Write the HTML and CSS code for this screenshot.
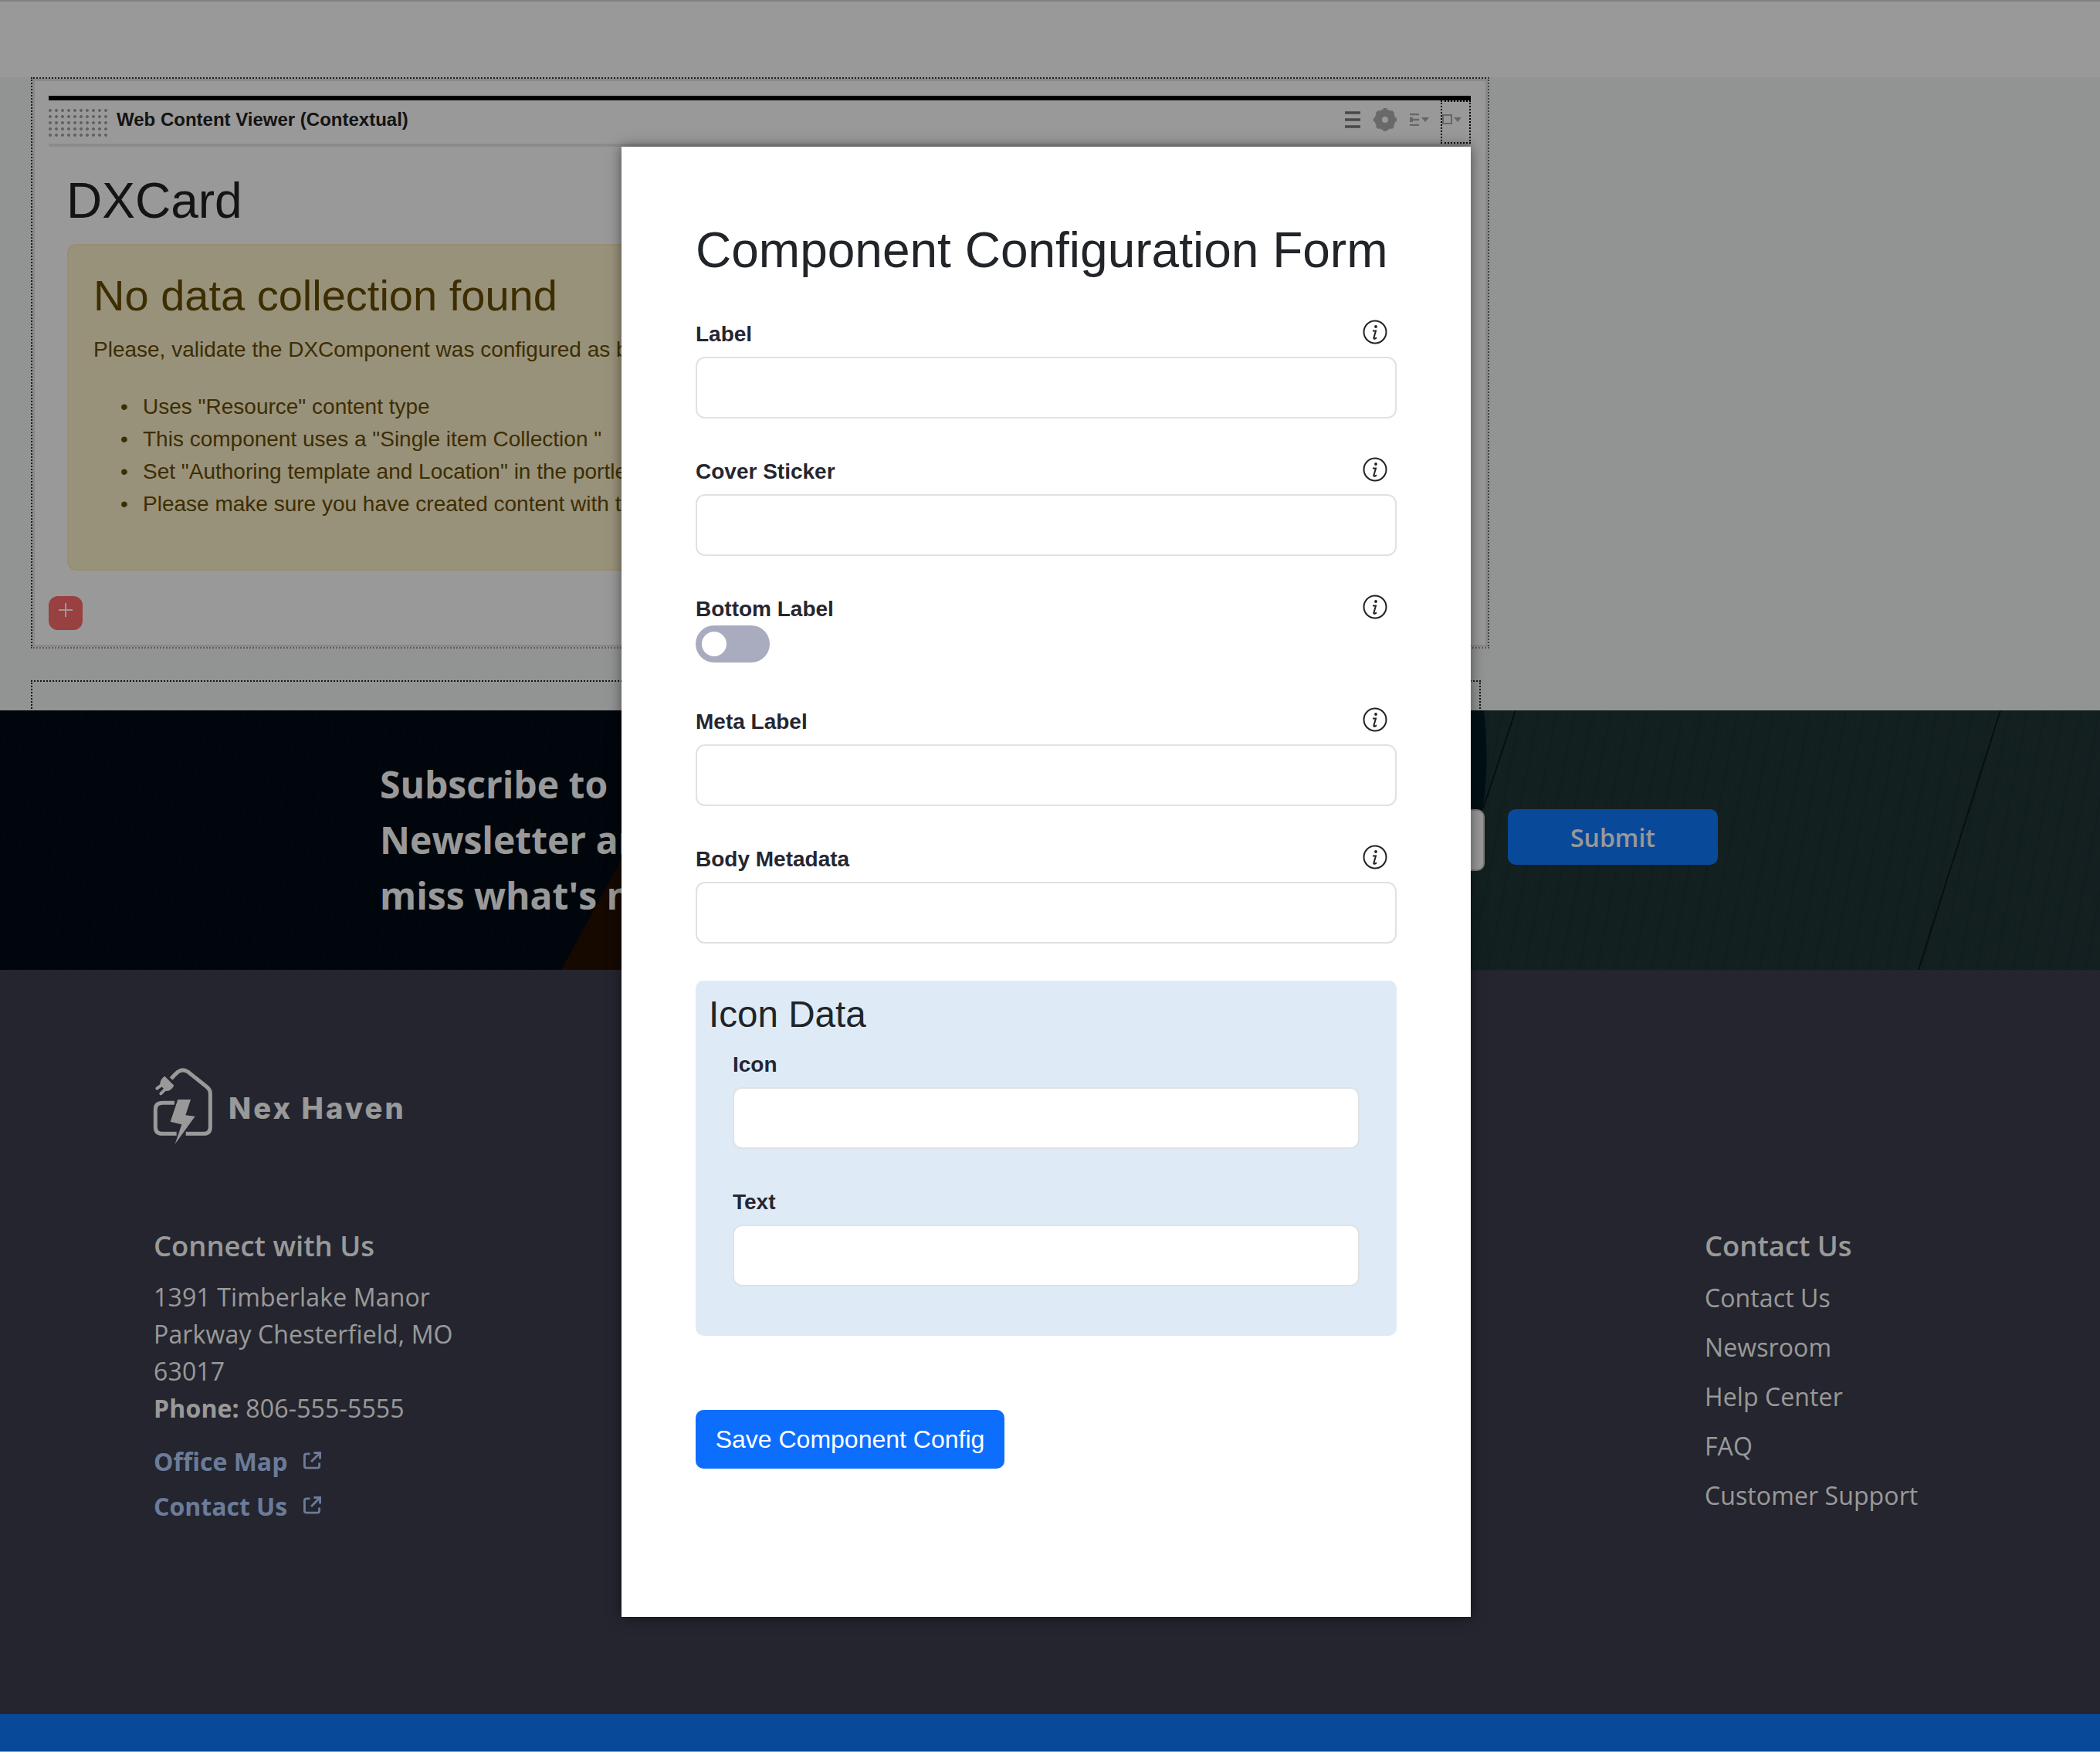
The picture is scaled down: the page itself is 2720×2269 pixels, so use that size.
FILE: index.html
```html
<!DOCTYPE html>
<html>
<head>
    <title>Component Configuration Form</title>
    <link rel="stylesheet" href="styles.css">
</head>
<body>
    <div class="page">
        <div class="top-strip"></div>
        <div class="content-area">
            <div class="portlet-frame">
                <div class="portlet-bar"></div>
                <div class="portlet-head">
                    <span class="grip"></span>
                    <span class="portlet-title">Web Content Viewer (Contextual)</span>
                    <span class="portlet-tools">
                        <svg class="tool" width="20" height="22" viewBox="0 0 20 22"><path d="M0 2h20M0 11h20M0 20h20" stroke="#7a7a7a" stroke-width="3.500" fill="none"/></svg>
                        <svg class="tool" width="36" height="36" viewBox="0 0 36 36"><circle cx="18" cy="18" r="10" fill="none" stroke="#b0b0b0" stroke-width="7"/><path d="M18 3v30M3 18h30M7.400 7.400l21.200 21.200M28.600 7.400L7.400 28.600" stroke="#b0b0b0" stroke-width="5"/><circle cx="18" cy="18" r="4" fill="#fff"/></svg>
                        <svg class="tool" width="26" height="16" viewBox="0 0 26 16"><path d="M0 1h12M0 8h12M0 15h12" stroke="#aaa" stroke-width="2.500"/><path d="M0 5h4v6H0zM15 5h10l-5 6z" fill="#aaa"/></svg>
                        <span class="tool-focus">
                            <svg width="26" height="14" viewBox="0 0 26 14"><rect x="1" y="1" width="11" height="11" fill="none" stroke="#aaa" stroke-width="2"/><path d="M15 4h10l-5 6z" fill="#aaa"/></svg>
                        </span>
                    </span>
                </div>
                <h1 class="portlet-heading">DXCard</h1>
                <div class="alert-box">
                    <h2>No data collection found</h2>
                    <p>Please, validate the DXComponent was configured as below:</p>
                    <ul>
                        <li>Uses "Resource" content type</li>
                        <li>This component uses a "Single item Collection "</li>
                        <li>Set "Authoring template and Location" in the portlet settings</li>
                        <li>Please make sure you have created content with this template</li>
                    </ul>
                </div>
                <div class="add-btn"><svg width="20" height="20" viewBox="0 0 20 20"><path d="M10 1v18M1 10h18" stroke="#fff" stroke-width="2"/></svg></div>
            </div>
            <div class="empty-frame"></div>
        </div>

        <div class="newsletter">
            <svg class="newsletter-art" width="2720" height="336" viewBox="0 0 2720 336">
                <path d="M805 193L727 336H805z" fill="#241000"/>
                <path d="M1905 0H1922Q1930 70 1920 130L1905 200z" fill="#001c22"/>
                <path d="M1963 0L1921 127M2591 0L2485 336" stroke="#000" stroke-width="2" fill="none" opacity=".55"/>
            </svg>
            <h3 class="newsletter-text">Subscribe to<br>Newsletter and never<br>miss what's new</h3>
            <div class="newsletter-input"></div>
            <button class="newsletter-btn" type="button">Submit</button>
        </div>

        <div class="footer">
            <div class="footer-left">
                <div class="brand">
                    <svg width="79" height="100" viewBox="85 70 235 300">
                        <path d="M155 112Q170 95 182 85Q200 72 220 85L295 145Q307 155 307 170V300Q307 326 280 326H212M168 206H122Q94 206 94 232V300Q94 326 122 326H176" fill="none" stroke="#fff" stroke-width="15"/>
                        <path d="M181 193H231L211 254L248 258L170 366L196 290L152 279z" fill="#fff"/>
                        <path d="M130 102L166 138Q156 160 135 160L112 137Q110 115 130 102z" fill="#fff"/>
                        <path d="M120 135L100 150M135 150L115 170" fill="none" stroke="#fff" stroke-width="12" stroke-linecap="round"/>
                    </svg>
                    <span class="brand-name">Nex Haven</span>
                </div>
                <div class="footer-col">
                    <h4>Connect with Us</h4>
                    <p class="address">1391 Timberlake Manor Parkway Chesterfield, MO 63017<br><b>Phone:</b> 806-555-5555</p>
                    <div class="ext-links">
                        <a class="ext-link">Office Map <svg width="23" height="23" viewBox="0 0 24 24"><path d="M9 3H4Q1.500 3 1.500 5.500V19.500Q1.500 22 4 22H19Q21.500 22 21.500 19.500V15M14 1.500H22.500V10M22 2L10.500 13.500" fill="none" stroke="#b2ceff" stroke-width="3"/></svg></a>
                        <a class="ext-link">Contact Us <svg width="23" height="23" viewBox="0 0 24 24"><path d="M9 3H4Q1.500 3 1.500 5.500V19.500Q1.500 22 4 22H19Q21.500 22 21.500 19.500V15M14 1.500H22.500V10M22 2L10.500 13.500" fill="none" stroke="#b2ceff" stroke-width="3"/></svg></a>
                    </div>
                </div>
            </div>
            <div class="footer-col footer-right">
                <h4>Contact Us</h4>
                <ul>
                    <li>Contact Us</li>
                    <li>Newsroom</li>
                    <li>Help Center</li>
                    <li>FAQ</li>
                    <li>Customer Support</li>
                </ul>
            </div>
        </div>
        <div class="bottom-bar"></div>
    </div>

    <div class="overlay"></div>

    <div class="modal">
        <h2 class="modal-title">Component Configuration Form</h2>

        <div class="field">
            <div class="field-head">
                <label>Label</label>
                <svg class="info" width="32" height="32" viewBox="0 0 32 32"><circle cx="16" cy="16" r="14.500" fill="none" stroke="#222" stroke-width="2"/><circle cx="17" cy="9" r="1.900" fill="#222"/><path d="M13 14.500h4l-2.600 9q-.4 1.600 1.200 1.200l2.400-1.400" fill="none" stroke="#222" stroke-width="2"/></svg>
            </div>
            <input class="text-input" type="text">
        </div>
        <div class="field">
            <div class="field-head">
                <label>Cover Sticker</label>
                <svg class="info" width="32" height="32" viewBox="0 0 32 32"><circle cx="16" cy="16" r="14.500" fill="none" stroke="#222" stroke-width="2"/><circle cx="17" cy="9" r="1.900" fill="#222"/><path d="M13 14.500h4l-2.600 9q-.4 1.600 1.200 1.200l2.400-1.400" fill="none" stroke="#222" stroke-width="2"/></svg>
            </div>
            <input class="text-input" type="text">
        </div>
        <div class="field field-toggle">
            <div class="field-head">
                <label>Bottom Label</label>
                <svg class="info" width="32" height="32" viewBox="0 0 32 32"><circle cx="16" cy="16" r="14.500" fill="none" stroke="#222" stroke-width="2"/><circle cx="17" cy="9" r="1.900" fill="#222"/><path d="M13 14.500h4l-2.600 9q-.4 1.600 1.200 1.200l2.400-1.400" fill="none" stroke="#222" stroke-width="2"/></svg>
            </div>
            <span class="toggle"><span class="knob"></span></span>
        </div>
        <div class="field">
            <div class="field-head">
                <label>Meta Label</label>
                <svg class="info" width="32" height="32" viewBox="0 0 32 32"><circle cx="16" cy="16" r="14.500" fill="none" stroke="#222" stroke-width="2"/><circle cx="17" cy="9" r="1.900" fill="#222"/><path d="M13 14.500h4l-2.600 9q-.4 1.600 1.200 1.200l2.400-1.400" fill="none" stroke="#222" stroke-width="2"/></svg>
            </div>
            <input class="text-input" type="text">
        </div>
        <div class="field">
            <div class="field-head">
                <label>Body Metadata</label>
                <svg class="info" width="32" height="32" viewBox="0 0 32 32"><circle cx="16" cy="16" r="14.500" fill="none" stroke="#222" stroke-width="2"/><circle cx="17" cy="9" r="1.900" fill="#222"/><path d="M13 14.500h4l-2.600 9q-.4 1.600 1.200 1.200l2.400-1.400" fill="none" stroke="#222" stroke-width="2"/></svg>
            </div>
            <input class="text-input" type="text">
        </div>

        <div class="group">
            <h3 class="group-title">Icon Data</h3>
            <div class="group-fields">
                <div class="field">
                    <div class="field-head"><label>Icon</label></div>
                    <input class="text-input" type="text">
                </div>
                <div class="field">
                    <div class="field-head"><label>Text</label></div>
                    <input class="text-input" type="text">
                </div>
            </div>
        </div>

        <button class="save-btn" type="button">Save Component Config</button>
    </div>
</body>
</html>
```

FILE: styles.css
```css
html, body {
    margin: 0;
    padding: 0;
}
body {
    position: relative;
    width: 2720px;
    height: 2269px;
    overflow: hidden;
    font-family: "Liberation Sans", Arial, sans-serif;
    background: #fff;
}
.page {
    width: 2720px;
}
.top-strip {
    height: 98px;
    border-top: 2px solid #d8d8d8;
    background: #fff;
}
.content-area {
    height: 820px;
    padding-left: 40px;
    background: #f3f7f5;
    box-sizing: border-box;
    overflow: hidden;
}
.portlet-frame {
    width: 1889px;
    height: 740px;
    box-sizing: border-box;
    padding: 22px 22px 0 21px;
    border: 2px dotted #333;
    border-bottom-color: #999;
    border-right-color: #666;
    background: #fff;
    box-shadow: inset 0 0 0 3px #e4e4e4;
}
.portlet-bar {
    height: 6px;
    background: #000;
}
.portlet-head {
    display: flex;
    align-items: center;
    height: 56px;
    border-bottom: 4px solid #e8e8e8;
    margin-bottom: 32px;
}
.grip {
    width: 78px;
    height: 38px;
    margin-right: 10px;
    background-image: radial-gradient(circle, #a5a5a5 1.700px, transparent 2.200px);
    background-size: 8px 8px;
    background-position: -2px 0;
}
.portlet-title {
    margin-bottom: 6px;
    font-size: 24px;
    font-weight: bold;
    color: #222;
}
.portlet-tools {
    margin-left: auto;
    display: flex;
    align-items: center;
    height: 100%;
}
.tool {
    margin: 0 14px 6px 0;
}
.tool-focus {
    display: flex;
    align-items: center;
    width: 39px;
    height: 56px;
    box-sizing: border-box;
    padding-bottom: 6px;
    border: 2px dotted #000;
}
.portlet-heading {
    margin: 0 0 17px 23px;
    font-size: 64px;
    line-height: 77px;
    font-weight: normal;
    color: #222;
}
.alert-box {
    margin-left: 24px;
    width: 1700px;
    height: 423px;
    box-sizing: border-box;
    padding: 31px 32px 0;
    border: 2px solid #ffecb5;
    border-radius: 12px;
    background: #fff3cd;
    color: #664d03;
}
.alert-box h2 {
    margin: 0 0 16px 0;
    font-size: 56px;
    line-height: 67px;
    font-weight: normal;
}
.alert-box p {
    margin: 0 0 32px 0;
    font-size: 28px;
    line-height: 42px;
}
.alert-box ul {
    margin: 0;
    padding-left: 64px;
    font-size: 28px;
    line-height: 42px;
    list-style: none;
}
.alert-box li {
    position: relative;
}
.alert-box li::before {
    content: "\2022";
    position: absolute;
    left: -29px;
}
.add-btn {
    width: 44px;
    height: 44px;
    margin-top: 33px;
    display: flex;
    justify-content: center;
    padding-top: 8px;
    box-sizing: border-box;
    border-radius: 12px;
    background: #ff6b6b;
}
.empty-frame {
    width: 1878px;
    height: 80px;
    margin-top: 41px;
    box-sizing: border-box;
    border: 2px dotted #222;
}
.newsletter {
    position: relative;
    display: flex;
    height: 336px;
    box-sizing: border-box;
    padding: 128px 0 0 492px;
    background-color: #203536;
    background-image:
        repeating-linear-gradient(101deg, rgba(0, 0, 0, 0.05) 0, rgba(0, 0, 0, 0.05) 3px, transparent 3px, transparent 11px, rgba(255, 255, 255, 0.01) 11px, rgba(255, 255, 255, 0.01) 14px, transparent 14px, transparent 23px),
        linear-gradient(90deg, #000a14 0%, #000a14 35%, #203636 68%, #203536 100%);
    overflow: hidden;
}
.newsletter-art {
    position: absolute;
    left: 0;
    top: 0;
}
.newsletter-text {
    position: relative;
    width: 640px;
    margin: -68px 0 0 0;
    font-family: "Open Sans", sans-serif;
    font-size: 48px;
    line-height: 72px;
    font-weight: 700;
    color: #fff;
    white-space: nowrap;
}
.newsletter-input {
    position: relative;
    width: 791px;
    height: 80px;
    box-sizing: border-box;
    border: 2px solid #ccc;
    border-radius: 10px;
    background: #fff;
}
.newsletter-btn {
    position: relative;
    width: 272px;
    height: 72px;
    margin-left: 30px;
    border: none;
    border-radius: 10px;
    background: #107bff;
    color: #fff;
    font-family: "Open Sans", sans-serif;
    font-size: 32px;
    font-weight: 600;
}
.footer {
    display: grid;
    grid-template-columns: 2009px 1fr;
    height: 964px;
    box-sizing: border-box;
    padding: 127px 0 0 199px;
    background: #3c3e4d;
    color: #fff;
    font-family: "Open Sans", sans-serif;
}
.brand {
    display: flex;
    align-items: center;
    height: 100px;
    margin-bottom: 103px;
    margin-left: -1px;
}
.brand-name {
    margin: 3px 0 0 19px;
    font-family: Inter, sans-serif;
    font-size: 38px;
    font-weight: 800;
    letter-spacing: 3.100px;
}
.footer-col {
    width: 420px;
}
.footer-col h4 {
    margin: 0 0 16px 0;
    font-size: 36.400px;
    line-height: 54px;
    font-weight: 600;
}
.address {
    margin: 0 0 16px 0;
    width: 410px;
    font-size: 32px;
    line-height: 48px;
    letter-spacing: 0.150px;
}
.ext-link {
    display: block;
    font-size: 32px;
    line-height: 58px;
    font-weight: 700;
    color: #b2ceff;
    white-space: nowrap;
}
.ext-link svg {
    margin-left: 12px;
    vertical-align: 2px;
}
.footer-right {
    width: auto;
    padding-top: 203px;
}
.footer-right h4 {
    margin-bottom: 9px;
}
.footer-right ul {
    margin: 0;
    padding: 0;
    list-style: none;
    font-size: 32px;
    line-height: 64px;
    letter-spacing: 0.100px;
}
.bottom-bar {
    height: 48px;
    background: #107bff;
}
.overlay {
    position: absolute;
    left: 0;
    top: 0;
    width: 2720px;
    height: 2269px;
    background: rgba(0, 0, 0, 0.4);
}
.modal {
    position: absolute;
    left: 805px;
    top: 190px;
    width: 1100px;
    height: 1904px;
    box-sizing: border-box;
    padding: 94px 96px 0;
    background: #fff;
    box-shadow: 0 0 16px rgba(0, 0, 0, 0.5);
}
.modal-title {
    margin: 0 0 47px 0;
    font-size: 64px;
    line-height: 80px;
    font-weight: normal;
    color: #212529;
}
.field {
    margin-bottom: 47px;
}
.field-head {
    display: flex;
    justify-content: space-between;
    align-items: flex-start;
    height: 42px;
    margin-bottom: 9px;
}
.field-head label {
    font-size: 28px;
    line-height: 44px;
    font-weight: bold;
    color: #252631;
}
.info {
    margin: 3px 12px 0 0;
}
.text-input {
    display: block;
    width: 100%;
    height: 80px;
    box-sizing: border-box;
    border: 2px solid #dee2e6;
    border-radius: 12px;
    background: #fff;
}
.field-toggle {
    margin-bottom: 55px;
}
.field-toggle .field-head {
    margin-bottom: 1px;
}
.toggle {
    display: block;
    position: relative;
    width: 96px;
    height: 48px;
    border-radius: 24px;
    background: #a9abbf;
}
.knob {
    position: absolute;
    left: 8px;
    top: 8px;
    width: 32px;
    height: 32px;
    border-radius: 50%;
    background: #fff;
}
.group {
    height: 460px;
    box-sizing: border-box;
    padding: 15px 0 0 17px;
    margin-top: 48px;
    border-radius: 10px;
    background: #deebf7;
}
.group-title {
    margin: 0 0 14px 0;
    font-size: 47.600px;
    line-height: 58px;
    font-weight: normal;
    color: #212529;
}
.group-fields {
    padding: 0 48px 0 31px;
}
.save-btn {
    display: block;
    width: 400px;
    height: 76px;
    margin-top: 96px;
    border: none;
    border-radius: 10px;
    background: #0d6efd;
    color: #fff;
    font-family: "Liberation Sans", Arial, sans-serif;
    font-size: 32px;
}
```
